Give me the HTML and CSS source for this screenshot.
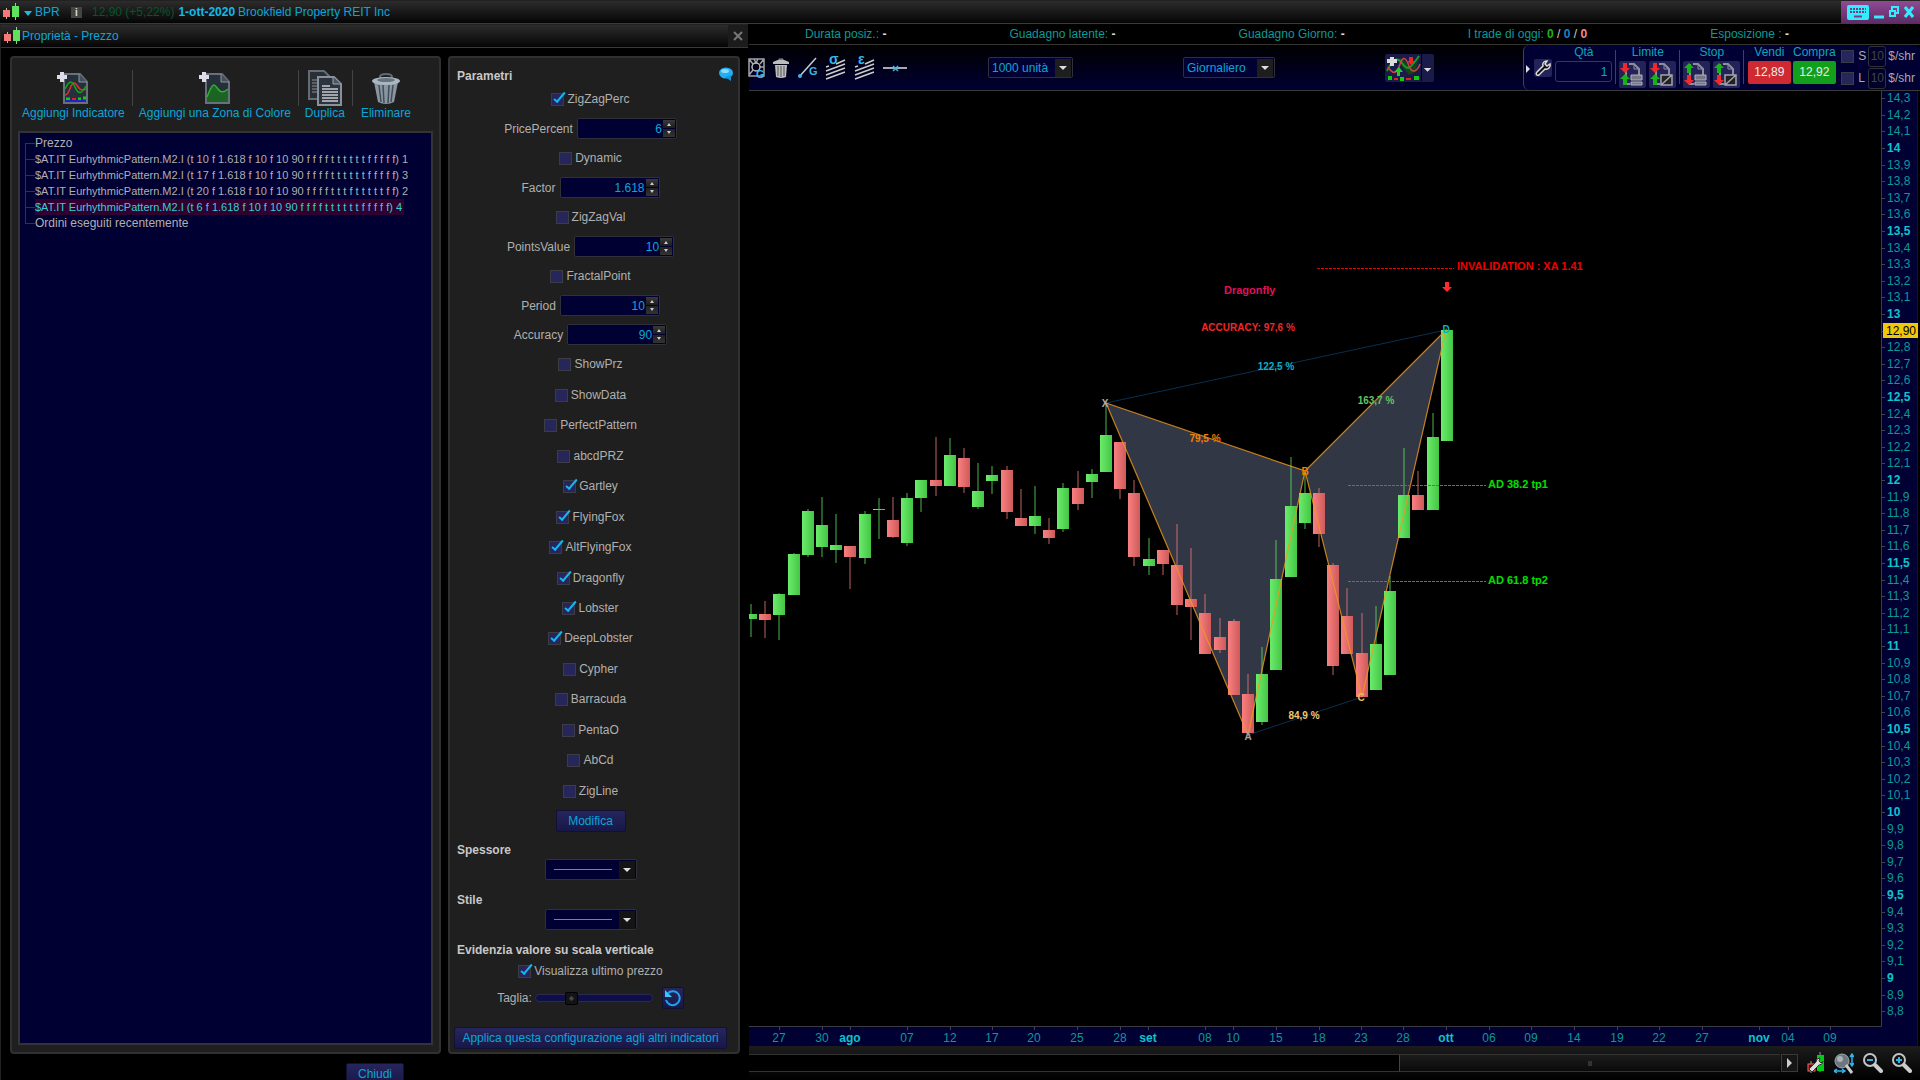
FILE: index.html
```html
<!DOCTYPE html>
<html lang="it">
<head>
    <meta charset="UTF-8">
    <meta name="viewport" content="width=device-width, initial-scale=1.0">
    <title>BPR - Brookfield Property REIT Inc</title>
    <link rel="stylesheet" href="styles.css">
</head>
<body>
    <svg class="defs" aria-hidden="true">
        <symbol id="i-candles" viewBox="0 0 18 18">
            <path d="M4.500 5v11M13.500 0v17" stroke="#9c9" stroke-width="1"/>
            <rect x="1" y="7" width="7" height="7" fill="#f47a7a"/>
            <rect x="10" y="3" width="7" height="11" fill="#5fe35f"/>
        </symbol>
        <symbol id="i-limit" viewBox="0 0 27 27">
            <path d="M10 3h5l5 5v6M7 3v20h4" fill="none" stroke="#8e8e9c" stroke-width="2"/>
            <path d="M15 3v5h5" fill="none" stroke="#8e8e9c"/>
            <path d="M4 2h4v5h3l-5 5-5-5h3z" fill="#f02a2a"/>
            <path d="M6 13l5 5H8v6H4v-6H1z" fill="#17b317"/>
        </symbol>
        <symbol id="i-stop" viewBox="0 0 27 27">
            <path d="M10 3h5l5 5v6M7 3v20h4" fill="none" stroke="#8e8e9c" stroke-width="2"/>
            <path d="M15 3v5h5" fill="none" stroke="#8e8e9c"/>
            <path d="M6 2l5 5H8v5H4V7H1z" fill="#17b317"/>
            <path d="M4 14h4v5h3l-5 5-5-5h3z" fill="#f02a2a"/>
        </symbol>
        <symbol id="i-bars" viewBox="0 0 27 27">
            <path d="M12 14h11v5H12zM12 21h11v3H12z" fill="#777786" stroke="#b4b4bf"/>
        </symbol>
        <symbol id="i-slash" viewBox="0 0 27 27">
            <path d="M12 14h11v10H12zM12 24l11-10" fill="#222" stroke="#a4a4af" stroke-width="1.500"/>
        </symbol>
        <symbol id="i-channel" viewBox="0 0 21 24">
            <path d="M1 15l19-7M1 19l19-7M1 23l19-7" stroke="#ccc" stroke-width="1.500"/>
            <path d="M1 11l3-1M11 8l9-4" stroke="#ccc" stroke-width="1.500"/>
        </symbol>
    </svg>

    <header class="titlebar">
        <svg class="candles"><use href="#i-candles"/></svg>
        <svg class="caret" viewBox="0 0 8 5"><path d="M0 0h8L4 5z" fill="#2bd"/></svg>
        <span class="symbol">BPR</span>
        <span class="info">i</span>
        <span class="quote">12,90 (+5,22%)</span>
        <strong>1-ott-2020</strong>
        <span>Brookfield Property REIT Inc</span>
        <div class="window-buttons">
            <button aria-label="Tastiera"><svg width="22" height="17" viewBox="0 0 22 17"><rect y="1" width="22" height="15" rx="2" fill="#35ecff"/><path d="M3 5h16M3 8h16" stroke="#7b3c80" stroke-width="2" stroke-dasharray="2 1"/><path d="M7 12.500h8" stroke="#7b3c80" stroke-width="2"/></svg></button>
            <button aria-label="Riduci"><svg width="10" height="14" viewBox="0 0 10 14"><path d="M0 12h10" stroke="#35ecff" stroke-width="3"/></svg></button>
            <button aria-label="Ripristina"><svg width="10" height="12" viewBox="0 0 10 12"><path d="M3 4V1h6v6H7" fill="none" stroke="#35ecff" stroke-width="2"/><rect x="1" y="5" width="5" height="5" fill="none" stroke="#35ecff" stroke-width="2"/></svg></button>
            <button aria-label="Chiudi finestra"><svg width="10" height="12" viewBox="0 0 10 12"><path d="M1 1l8 10M9 1L1 11" stroke="#35ecff" stroke-width="3"/></svg></button>
        </div>
    </header>

    <div class="workspace">
        <section class="dialog">
            <header class="titlebar dialog-title">
                <svg class="candles"><use href="#i-candles"/></svg>
                <span>Proprietà - Prezzo</span>
                <button class="dialog-close" aria-label="Chiudi pannello"><svg width="10" height="10" viewBox="0 0 10 10"><path d="M1 1l8 8M9 1L1 9" stroke="#777" stroke-width="2"/></svg></button>
            </header>
            <div class="dialog-body">
                <div class="panel tree-panel">
                    <div class="actions">
                        <button class="action">
                            <svg width="32" height="34" viewBox="0 0 32 34">
                                <path d="M7 3h16l7 8v21H7z" fill="#26303a" stroke="#66717d" stroke-width="2"/>
                                <path d="M22 3v8h8" fill="#444f5a" stroke="#8b96a2"/>
                                <path d="M8 24c5 0 5-12 9-12s4 10 12 6" fill="none" stroke="#d33" stroke-width="1.500"/>
                                <path d="M8 18c6-12 8-6 11 0s6 4 10-3" fill="none" stroke="#1a1" stroke-width="1.500"/>
                                <path d="M9 28h4M21 28h3M26 27h3" stroke="#1c1" stroke-width="3"/><path d="M15 28h4" stroke="#d22" stroke-width="2"/>
                                <path d="M8 30h21" stroke="#22c" stroke-width="2"/>
                                <path d="M5 1v10M0 6h10" stroke="#dcdcea" stroke-width="4"/>
                            </svg>
                            Aggiungi Indicatore
                        </button>
                        <button class="action">
                            <svg width="32" height="34" viewBox="0 0 32 34">
                                <path d="M7 3h16l7 8v21H7z" fill="#26303a" stroke="#66717d" stroke-width="2"/>
                                <path d="M22 3v8h8" fill="#444f5a" stroke="#8b96a2"/>
                                <path d="M8 26c2-4 4-12 7-12s5 12 14 4v13H8z" fill="#1d6424"/>
                                <path d="M8 26c2-4 4-12 7-12s5 12 14 4" fill="none" stroke="#2db02d" stroke-width="1.500"/>
                                <path d="M5 1v10M0 6h10" stroke="#dcdcea" stroke-width="4"/>
                            </svg>
                            Aggiungi una Zona di Colore
                        </button>
                        <button class="action">
                            <svg width="36" height="36" viewBox="0 0 36 36">
                                <path d="M2 1h15l7 7v21H2z" fill="#2a2f36" stroke="#646c76" stroke-width="2"/>
                                <path d="M5 10h6M5 13h6M5 16h6M5 19h6M5 22h6" stroke="#8b919a"/>
                                <path d="M11 7h16l7 7v21H11z" fill="#2d343d" stroke="#88929e" stroke-width="2"/>
                                <path d="M26 7v7h8" fill="#4c5662" stroke="#9aa4b0"/>
                                <path d="M15 16h8M15 19h16M15 22h16M15 25h16M15 28h16M15 31h16" stroke="#c8ccd2" stroke-width="1.500"/>
                            </svg>
                            Duplica
                        </button>
                        <button class="action">
                            <svg width="30" height="34" viewBox="0 0 30 34">
                                <path d="M9 8V6q0-3 6-3t6 3v2" fill="none" stroke="#606973" stroke-width="2"/>
                                <path d="M3 11h24l-4 20q-8 4-16 0z" fill="#8996a1"/>
                                <path d="M8 14l2 17M12 14l1 18M18 14l-1 18M22 14l-2 17" stroke="#414c57" stroke-width="1.500"/>
                                <ellipse cx="15" cy="10" rx="14" ry="4" fill="#a9b7c3"/><ellipse cx="15" cy="9" rx="9" ry="2" fill="#66737f"/>
                            </svg>
                            Eliminare
                        </button>
                    </div>
                    <ul class="tree">
                        <li><span>Prezzo</span></li>
                        <li><span class="indicator">$AT.IT EurhythmicPattern.M2.I (t 10 f 1.618 f 10 f 10 90 f f f f t t t t t t f f f f f) 1</span></li>
                        <li><span class="indicator">$AT.IT EurhythmicPattern.M2.I (t 17 f 1.618 f 10 f 10 90 f f f f t t t t t t f f f f f) 3</span></li>
                        <li><span class="indicator">$AT.IT EurhythmicPattern.M2.I (t 20 f 1.618 f 10 f 10 90 f f f f t t t f t t t t t f f) 2</span></li>
                        <li><span class="indicator selected">$AT.IT EurhythmicPattern.M2.I (t 6 f 1.618 f 10 f 10 90 f f f f t t t t t t f f f f f) 4</span></li>
                        <li><span>Ordini eseguiti recentemente</span></li>
                    </ul>
                </div>

                <form class="panel params">
                    <div class="params-head">
                        <h2>Parametri</h2>
                        <svg width="14" height="14" viewBox="0 0 14 14"><ellipse cx="7" cy="6" rx="7" ry="5.500" fill="#23aef3"/><path d="M6 10l6 4v-6z" fill="#1295e0"/><ellipse cx="6" cy="4" rx="4" ry="2" fill="#8adcff"/></svg>
                    </div>
                    <div class="group">
                        <label class="check"><input type="checkbox" checked>ZigZagPerc</label>
                        <div class="number"><label for="pricePercent">PricePercent</label><span class="spin"><input type="number" id="pricePercent" value="6"><i></i></span></div>
                        <label class="check"><input type="checkbox">Dynamic</label>
                        <div class="number"><label for="factor">Factor</label><span class="spin"><input type="number" id="factor" step="any" value="1.618"><i></i></span></div>
                        <label class="check"><input type="checkbox">ZigZagVal</label>
                        <div class="number"><label for="pointsValue">PointsValue</label><span class="spin"><input type="number" id="pointsValue" value="10"><i></i></span></div>
                        <label class="check"><input type="checkbox">FractalPoint</label>
                        <div class="number"><label for="period">Period</label><span class="spin"><input type="number" id="period" value="10"><i></i></span></div>
                        <div class="number"><label for="accuracy">Accuracy</label><span class="spin"><input type="number" id="accuracy" value="90"><i></i></span></div>
                    </div>
                    <div class="group patterns">
                        <label class="check"><input type="checkbox">ShowPrz</label>
                        <label class="check"><input type="checkbox">ShowData</label>
                        <label class="check"><input type="checkbox">PerfectPattern</label>
                        <label class="check"><input type="checkbox">abcdPRZ</label>
                        <label class="check"><input type="checkbox" checked>Gartley</label>
                        <label class="check"><input type="checkbox" checked>FlyingFox</label>
                        <label class="check"><input type="checkbox" checked>AltFlyingFox</label>
                        <label class="check"><input type="checkbox" checked>Dragonfly</label>
                        <label class="check"><input type="checkbox" checked>Lobster</label>
                        <label class="check"><input type="checkbox" checked>DeepLobster</label>
                        <label class="check"><input type="checkbox">Cypher</label>
                        <label class="check"><input type="checkbox">Barracuda</label>
                        <label class="check"><input type="checkbox">PentaO</label>
                        <label class="check"><input type="checkbox">AbCd</label>
                        <label class="check"><input type="checkbox">ZigLine</label>
                    </div>
                    <button type="button" class="btn modify">Modifica</button>
                    <h2><label for="thickness">Spessore</label></h2>
                    <select id="thickness" class="combo line-combo"><option></option></select>
                    <h2><label for="style">Stile</label></h2>
                    <select id="style" class="combo line-combo"><option></option></select>
                    <h2>Evidenzia valore su scala verticale</h2>
                    <label class="check last-price"><input type="checkbox" checked>Visualizza ultimo prezzo</label>
                    <div class="size-row">
                        <label for="size">Taglia:</label>
                        <input type="range" id="size" min="0" max="100" value="28">
                        <button type="button" class="btn reset" aria-label="Ripristina"><svg width="18" height="18" viewBox="0 0 18 18"><path d="M4 4a7 7 0 1 1-2 7" fill="none" stroke="#1ea4ee" stroke-width="2"/><path d="M1 1v7h7z" fill="#3cc4ff"/></svg></button>
                    </div>
                    <button type="button" class="btn apply">Applica questa configurazione agli altri indicatori</button>
                </form>
            </div>
            <button class="btn close-btn">Chiudi</button>
        </section>

        <main class="main">
            <div class="stats">
                <span>Durata posiz.: <b>-</b></span>
                <span>Guadagno latente: <b>-</b></span>
                <span>Guadagno Giorno: <b>-</b></span>
                <span>I trade di oggi: <b class="won">0</b> <em>/</em> <b class="even">0</b> <em>/</em> <b class="lost">0</b></span>
                <span>Esposizione : <b>-</b></span>
            </div>
            <div class="toolbar">
                <div class="draw-tools">
                    <button aria-label="Griglia"><svg width="16" height="22" viewBox="0 0 16 22"><path d="M0 2h15v17H0zM0 2l4 5M15 2l-4 5M0 18l4-5M15 10h-4M5 2l2 4M9 2L7 6" fill="none" stroke="#a3a3a3" stroke-width="1.500"/><circle cx="7" cy="10" r="4" fill="none" stroke="#bbb" stroke-width="1.500"/><text x="7" y="21" class="glyph">G</text></svg></button>
                    <button aria-label="Cestino"><svg width="16" height="20" viewBox="0 0 16 20"><path d="M0 4q8-5 16 0v2H0zM2 7h12l-1 12q-5 2-10 0z" fill="#bcbcbc"/><path d="M5 8v10M8 8v11M11 8v10" stroke="#555"/><path d="M6 2V1h4v1" stroke="#999" fill="none"/></svg></button>
                    <button aria-label="Segmento"><svg width="20" height="22" viewBox="0 0 20 22"><path d="M2 20L19 1" stroke="#ccc" stroke-width="1.500"/><circle cx="3" cy="19" r="2" fill="#3bb5e8"/><text x="12" y="18" class="glyph">G</text></svg></button>
                    <button aria-label="Sigma"><svg width="21" height="24" viewBox="0 0 21 24"><use href="#i-channel"/><text x="4" y="8" class="glyph greek">σ</text></svg></button>
                    <button aria-label="Epsilon"><svg width="21" height="24" viewBox="0 0 21 24"><use href="#i-channel"/><text x="4" y="8" class="glyph greek">ε</text></svg></button>
                    <button aria-label="Linea orizzontale"><svg width="24" height="10" viewBox="0 0 24 10"><path d="M0 5h24" stroke="#aaa" stroke-width="2"/><path d="M10 3l5 5M15 3l-5 5" stroke="#3bb5e8" stroke-width="1.500"/></svg></button>
                </div>
                <select class="combo units" aria-label="Unità"><option>1000 unità</option></select>
                <select class="combo timeframe" aria-label="Periodo"><option>Giornaliero</option></select>
                <button class="indicator-btn" aria-label="Indicatori">
                    <svg width="36" height="27" viewBox="0 0 36 27"><path d="M12 6q5-4 10 4c3 5 7 4 12-6l-4 14-6 3z" fill="#0d4a16"/><path d="M2 17C7 6 12 2 17 9s7 8 17-7" fill="none" stroke="#1b9a2b" stroke-width="2"/><path d="M3 13c6 9 9 6 12-3s6-6 9 2 8 6 11-2" fill="none" stroke="#c44" stroke-width="1.500"/><path d="M7 3v9M2 7h10" stroke="#ddd" stroke-width="4"/><path d="M14 13l4 5h-3v4h-3v-4h-3z" fill="#2c2"/><path d="M24 3h4v4h2l-4 4-4-4h2z" fill="#e22"/><path d="M3 24h4M15 25h4M29 24h5" stroke="#1c1" stroke-width="4"/><path d="M9 25h4M21 25h5" stroke="#d22" stroke-width="2"/></svg>
                    <svg class="drop" width="13" height="27" viewBox="0 0 13 27"><path d="M2 14h8l-4 4z" fill="#ddd"/></svg>
                </button>
                <div class="trade">
                    <svg class="trade-arrow" width="4" height="8" viewBox="0 0 4 8"><path d="M0 0l4 4-4 4z" fill="#ddd"/></svg>
                    <button class="tool wrench" aria-label="Impostazioni"><svg width="18" height="18" viewBox="0 0 18 18"><path d="M3 13l6-6c-1-3 1-5 4-5l-2 3 2 2 3-2c1 3-2 6-5 5l-6 6c-2 1-4-1-2-3z" fill="#111" stroke="#ddd" stroke-width="1.500"/></svg></button>
                    <div class="trade-col qty-col"><label for="qty">Qtà</label><input id="qty" class="qty" type="text" value="1"></div>
                    <div class="trade-col divided"><span>Limite</span><div class="pair">
                        <button class="tool" aria-label="Limite semplice"><svg width="27" height="27"><use href="#i-limit"/><use href="#i-bars"/></svg></button>
                        <button class="tool" aria-label="Limite obliquo"><svg width="27" height="27"><use href="#i-limit"/><use href="#i-slash"/></svg></button>
                    </div></div>
                    <div class="trade-col divided"><span>Stop</span><div class="pair">
                        <button class="tool" aria-label="Stop semplice"><svg width="27" height="27"><use href="#i-stop"/><use href="#i-bars"/></svg></button>
                        <button class="tool" aria-label="Stop obliquo"><svg width="27" height="27"><use href="#i-stop"/><use href="#i-slash"/></svg></button>
                    </div></div>
                    <div class="trade-col divided price-col"><span>Vendi</span><button class="sell">12,89</button></div>
                    <div class="trade-col price-col"><span>Compra</span><button class="buy">12,92</button></div>
                    <div class="risk">
                        <div><label><input type="checkbox">S</label><input type="text" value="10" aria-label="Stop per azione" disabled>$/shr</div>
                        <div><label><input type="checkbox">L</label><input type="text" value="10" aria-label="Limite per azione" disabled>$/shr</div>
                    </div>
                </div>
            </div>

            <svg id="chart" class="chart" viewBox="749 91 1171 955"></svg>

            <div class="bottom-bar">
                <div class="scroll-track"><div class="scroll-thumb"><i></i></div></div>
                <button class="scroll-next" aria-label="Avanti"><svg width="5" height="10" viewBox="0 0 5 10"><path d="M0 0l5 5-5 5z" fill="#ccc"/></svg></button>
                <button aria-label="Impostazioni grafico"><svg width="18" height="22" viewBox="0 0 18 22"><path d="M4 9v12M13 0v20" stroke="#999"/><rect x="1" y="12" width="7" height="7" fill="#511" stroke="#f66"/><rect x="10" y="3" width="7" height="16" fill="#0c1"/><path d="M2 17l7-7q0-4 4-4l-1 3 2 2 2-2q0 4-4 4l-7 7z" fill="#ddd" stroke="#333"/></svg></button>
                <button aria-label="Adatta"><svg width="20" height="21" viewBox="0 0 20 21"><circle cx="8" cy="8" r="7" fill="#6f7680" stroke="#9aa"/><circle cx="6" cy="6" r="3" fill="#a9b0b8"/><path d="M12 12l6 8" stroke="#ccc" stroke-width="3"/><path d="M18 2v10M16 4l2-3 2 3M16 10l2 3 2-3M1 18h9M3 16l-3 2 3 2M8 16l3 2-3 2" stroke="#2bb4ee" fill="none" stroke-width="1.500"/></svg></button>
                <button aria-label="Riduci zoom"><svg width="20" height="20" viewBox="0 0 20 20"><circle cx="7" cy="7" r="6" fill="#111" stroke="#c4c4c4" stroke-width="2"/><path d="M12 12l6 6" stroke="#ccc" stroke-width="4" stroke-linecap="round"/><path d="M4 7h6" stroke="#2bb4ee" stroke-width="2"/></svg></button>
                <button aria-label="Aumenta zoom"><svg width="20" height="20" viewBox="0 0 20 20"><circle cx="7" cy="7" r="6" fill="#111" stroke="#c4c4c4" stroke-width="2"/><path d="M12 12l6 6" stroke="#ccc" stroke-width="4" stroke-linecap="round"/><path d="M4 7h6M7 4v6" stroke="#2bb4ee" stroke-width="2"/></svg></button>
            </div>
        </main>
    </div>
    <script src="chart.js"></script>
</body>
</html>
```
FILE: styles.css
```css
* {
    box-sizing: border-box;
}
body {
    margin: 0;
    height: 100vh;
    display: flex;
    flex-direction: column;
    overflow: hidden;
    background: #000;
    color: #b0b0b0;
    font-family: "Liberation Sans", Arial, sans-serif;
    font-size: 12px;
}
button, input, select {
    font: inherit;
    color: inherit;
}
button {
    display: inline-flex;
    align-items: center;
    justify-content: center;
    padding: 0;
    border: 0;
    background: none;
    white-space: nowrap;
    cursor: pointer;
}
svg {
    display: block;
    flex: none;
}
.defs {
    position: absolute;
    width: 0;
    height: 0;
}

/* title bars */
.titlebar {
    flex: none;
    display: flex;
    align-items: center;
    height: 24px;
    padding-left: 2px;
    border-top: 1px solid #222;
    border-bottom: 1px solid #383838;
    background: linear-gradient(#2c2c2c, #050505);
    color: #0aa6d8;
}
.candles {
    width: 18px;
    height: 18px;
}
.caret {
    width: 8px;
    height: 5px;
    margin: 2px 3px 0 4px;
}
.symbol {
    width: 36px;
}
.info {
    width: 11px;
    height: 11px;
    margin-right: 10px;
    background: #444;
    color: #ddd;
    font-size: 10px;
    font-weight: bold;
    line-height: 11px;
    text-align: center;
}
.quote {
    margin-right: 4px;
    color: #07552a;
}
.titlebar strong {
    margin-right: 3px;
    color: #12b9ee;
}
.window-buttons {
    display: flex;
    align-items: center;
    gap: 5px;
    height: 23px;
    margin-left: auto;
    padding: 0 6px 0 6px;
    background: linear-gradient(#8f4b94, #5c2a62);
}

.workspace {
    flex: 1;
    display: flex;
    min-height: 0;
}

/* properties dialog */
.dialog {
    flex: none;
    width: 749px;
    display: flex;
    flex-direction: column;
    align-items: center;
    border-left: 1px solid #222;
}
.dialog-title {
    align-self: stretch;
    margin-right: 1px;
}
.dialog-title span {
    margin-left: 1px;
}
.dialog-close {
    width: 20px;
    height: 22px;
    margin-left: auto;
    background: #1c1c1c;
}
.dialog-body {
    flex: 1;
    align-self: stretch;
    display: flex;
    gap: 7px;
    padding: 8px 9px 0;
    min-height: 0;
}
.panel {
    border: 2px solid #303030;
    border-radius: 4px;
    background: #1f1f1f;
}
.tree-panel {
    flex: none;
    width: 431px;
    display: flex;
    flex-direction: column;
    padding: 10px 6px 7px;
}
.actions {
    display: flex;
    height: 63px;
    padding: 2px 0 0;
}
.action {
    position: relative;
    flex-direction: column;
    justify-content: flex-start;
    height: 50px;
    padding: 0 7px;
    color: #0aa6d8;
}
.action + .action::before {
    content: "";
    position: absolute;
    left: 0;
    top: 0;
    height: 36px;
    border-left: 1px solid #444;
}
.action svg {
    height: 36px;
}
.action:first-child {
    padding-left: 4px;
}
.action:last-child {
    padding-left: 9px;
}
.tree {
    flex: 1;
    margin: 0;
    padding: 2px 0 0 5px;
    border: 2px solid #333338;
    background: #000033;
    list-style: none;
    white-space: nowrap;
    overflow: hidden;
}
.tree li {
    position: relative;
    height: 16px;
    padding-left: 10px;
    line-height: 16px;
}
.tree li::before {
    content: "";
    position: absolute;
    left: 0;
    top: 0;
    width: 9px;
    height: 8px;
    border-left: 1px solid #0b3f6c;
    border-bottom: 1px solid #0b3f6c;
}
.tree li:not(:first-child):not(:last-child)::after {
    content: "";
    position: absolute;
    left: 0;
    top: 8px;
    height: 8px;
    border-left: 1px solid #0b3f6c;
}
.tree li:first-child::before {
    top: 8px;
    border-top: 1px solid #0b3f6c;
    border-bottom: 0;
}
.tree span {
    display: inline-block;
}
.tree .indicator {
    font-size: 11px;
}
.tree .selected {
    padding-right: 2px;
    background: #300030;
    color: #2fd0d8;
}

.params {
    flex: 1;
    min-width: 0;
    display: flex;
    flex-direction: column;
    align-items: center;
    padding: 5px 11px 3px 4px;
}
.params h2 {
    align-self: flex-start;
    height: 18px;
    margin: 9px 0 0 3px;
    color: #c8c8c8;
    font-size: 12px;
    line-height: 18px;
}
.params-head {
    align-self: stretch;
    display: flex;
    justify-content: space-between;
    align-items: center;
    height: 21px;
}
.params-head h2 {
    margin-top: 4px;
}
.params-head svg {
    margin-right: -6px;
}
.group {
    display: flex;
    flex-direction: column;
    align-items: center;
}
.patterns {
    flex: 1;
    margin-bottom: 4px;
}
.patterns .check {
    flex: 1;
}
.check {
    display: flex;
    align-items: center;
    gap: 3px;
    height: 30px;
}
input[type="checkbox"] {
    appearance: none;
    position: relative;
    width: 13px;
    height: 13px;
    margin: 1px 0 0;
    border: 1px solid #3c3c44;
    background: #26265a;
}
.check input:checked::after {
    content: "";
    position: absolute;
    left: 5px;
    top: -4px;
    width: 3px;
    height: 11px;
    border-right: 2px solid #12b8f5;
    border-bottom: 2px solid #12b8f5;
    transform: rotate(40deg);
}
.number {
    display: flex;
    align-items: center;
    gap: 4px;
    height: 29px;
}
.spin {
    display: flex;
    align-items: center;
    width: 100px;
    height: 21px;
    border: 1px solid #303038;
    border-radius: 2px;
    background: #000033;
}
.spin input {
    width: 84px;
    padding: 0;
    border: 0;
    background: none;
    color: #0aa6d8;
    text-align: right;
    appearance: textfield;
}
.spin input::-webkit-inner-spin-button {
    display: none;
}
.spin i {
    position: relative;
    width: 12px;
    height: 17px;
    margin-left: 1px;
    background: linear-gradient(#3a3a3a, #1c1c1c 47%, #000033 47%, #000033 53%, #222 53%, #333);
}
.spin i::before, .spin i::after {
    content: "";
    position: absolute;
    left: 4px;
    border: 2px solid transparent;
}
.spin i::before {
    top: 1px;
    border-bottom: 3px solid #ccc;
}
.spin i::after {
    bottom: 1px;
    border-top: 3px solid #ccc;
}
.btn {
    flex: none;
    height: 22px;
    border: 1px solid #111133;
    border-radius: 2px;
    background: linear-gradient(#26265e, #171747);
    color: #0aa6d8;
}
.modify {
    width: 70px;
}
.combo {
    appearance: none;
    flex: none;
    height: 21px;
    margin: 0;
    padding: 0 20px 0 3px;
    border: 1px solid #30303a;
    border-radius: 2px;
    background: url("data:image/svg+xml,%3Csvg xmlns='http://www.w3.org/2000/svg' width='17' height='19'%3E%3Crect width='16' height='18' y='1' fill='%231e1e1e'/%3E%3Cpath d='M4 8h8l-4 4z' fill='%23ddd'/%3E%3C/svg%3E") no-repeat right center, #000033;
    color: #0aa6d8;
}
.line-combo {
    width: 92px;
    margin-bottom: 2px;
    background: url("data:image/svg+xml,%3Csvg xmlns='http://www.w3.org/2000/svg' width='17' height='19'%3E%3Crect width='16' height='18' y='1' fill='%23141414'/%3E%3Cpath d='M4 8h8l-4 4z' fill='%23ddd'/%3E%3C/svg%3E") no-repeat right center, linear-gradient(#14a8e4, #14a8e4) no-repeat 8px 9px / 58px 1px, #000033;
}
.last-price {
    height: 24px;
}
.size-row {
    display: flex;
    align-items: center;
    height: 30px;
}
.size-row input {
    appearance: none;
    width: 118px;
    height: 8px;
    margin: 0 9px 0 3px;
    border: 1px solid #2b2b50;
    border-radius: 4px;
    background: #0e0e48;
}
.size-row input::-webkit-slider-thumb {
    appearance: none;
    width: 13px;
    height: 13px;
    border: 1px solid #000;
    border-radius: 2px;
    background: radial-gradient(#444 25%, #131313 30%);
}
.reset {
    width: 22px;
}
.apply {
    align-self: stretch;
    margin-top: 14px;
}
.close-btn {
    width: 58px;
    margin: 9px 0 -5px;
}

/* chart side */
.main {
    flex: 1;
    min-width: 0;
    display: flex;
    flex-direction: column;
}
.stats {
    flex: none;
    display: flex;
    justify-content: space-between;
    height: 21px;
    padding: 0 131px 0 56px;
    border-bottom: 1px solid #333;
    color: #0a9a98;
    line-height: 20px;
    white-space: nowrap;
}
.stats b {
    color: #ddd;
}
.stats em {
    color: #ccc;
    font-style: normal;
}
.stats .won {
    color: #19b419;
}
.stats .even {
    color: #1a80c8;
}
.stats .lost {
    color: #f58a8a;
}
.toolbar {
    flex: none;
    display: flex;
    align-items: center;
    height: 46px;
    border-bottom: 1px solid #3a3a3a;
    background: linear-gradient(#000, #000033);
}
.draw-tools {
    display: flex;
    align-items: center;
    gap: 8px;
    flex: 0 1 239px;
}
.draw-tools svg {
    overflow: visible;
}
.glyph {
    fill: #3bb5e8;
    font-size: 11px;
    font-weight: bold;
}
.greek {
    font-size: 14px;
}
.units {
    width: 85px;
    margin-right: 110px;
}
.timeframe {
    width: 92px;
}
.indicator-btn {
    height: 28px;
    margin-left: auto;
    border-radius: 2px;
    background: #1b1b4a;
}
.indicator-btn .drop {
    border-left: 1px solid #000;
}
.trade {
    display: flex;
    align-items: flex-start;
    height: 45px;
    margin-left: 89px;
    padding: 0 5px 0 2px;
    border-left: 1px solid #444;
    border-radius: 6px;
    background: #000033;
    color: #0aa6b8;
}
.trade-arrow {
    margin: 20px 4px 0 0;
}
.tool {
    width: 27px;
    height: 27px;
    border-radius: 2px;
    background: #23235a;
}
.wrench {
    width: 18px;
    height: 18px;
    margin: 14px 3px 0 0;
}
.trade-col {
    display: flex;
    flex-direction: column;
    align-items: center;
    height: 44px;
    line-height: 15px;
}
.trade-col > :last-child {
    margin-top: 1px;
}
.divided {
    position: relative;
    margin-left: 7px;
}
.divided::before {
    content: "";
    position: absolute;
    left: -4px;
    top: 5px;
    height: 34px;
    border-left: 1px solid #444;
}
.qty {
    width: 57px;
    height: 21px;
    padding: 0 4px;
    border: 1px solid #3a3a44;
    border-radius: 3px;
    background: #000033;
    color: #0aa6d8;
    text-align: right;
}
.pair {
    display: flex;
    gap: 3px;
}
.price-col {
    width: 44px;
}
.price-col:not(.divided) {
    margin-left: 1px;
}
.sell, .buy {
    width: 43px;
    height: 23px;
    border-radius: 2px;
    color: #eee;
}
.sell {
    background: #cf2a32;
}
.buy {
    background: #12a01c;
}
.risk {
    display: flex;
    flex-direction: column;
    margin-left: 5px;
    color: #aaa;
}
.risk div, .risk label {
    display: flex;
    align-items: center;
}
.risk div {
    gap: 2px;
    height: 22px;
}
.risk label {
    gap: 4px;
    width: 25px;
}
.risk input[type="text"] {
    width: 18px;
    height: 21px;
    padding: 0;
    border: 1px solid #30303a;
    border-radius: 3px;
    background: #000028;
    color: #444;
    text-align: center;
}

.chart {
    width: 100%;
    min-height: 0;
    flex: 0 1 auto;
}
.chart text {
    font-size: 12px;
    fill: #0a9a98;
    text-anchor: middle;
}
.chart .price {
    text-anchor: start;
}
.chart .major {
    font-weight: bold;
    fill: #0cc4cc;
}
.chart .current {
    fill: #000;
}
.chart .note {
    font-size: 10px;
    font-weight: bold;
}
.chart .title {
    font-size: 11px;
    font-weight: bold;
    text-anchor: start;
}

.bottom-bar {
    flex: 1 0 34px;
    display: flex;
    align-items: center;
    gap: 9px;
    padding: 0 8px 0 0;
    background: linear-gradient(#1c1c1c, #000);
}
.scroll-track {
    flex: 1;
    height: 18px;
    border-top: 1px solid #333;
    border-bottom: 1px solid #333;
    background: #000;
}
.scroll-thumb {
    display: flex;
    align-items: center;
    justify-content: center;
    width: 37%;
    height: 16px;
    margin-left: auto;
    border-left: 1px solid #444;
    background: linear-gradient(#1c1c1c, #0a0a0a);
}
.scroll-thumb i {
    width: 4px;
    height: 5px;
    background: #333;
}
.scroll-next {
    width: 17px;
    height: 18px;
    margin-left: -8px;
    border: 1px solid #3a3a3a;
    background: #151515;
}
```
FILE: chart.js
```js
const chart = document.getElementById('chart');
const NS = 'http://www.w3.org/2000/svg';

function add(tag, attrs, text) {
    const el = document.createElementNS(NS, tag);
    for (const name in attrs) el.setAttribute(name, attrs[name]);
    if (text) el.textContent = text;
    chart.appendChild(el);
    return el;
}

// colour, wick top, body top, body bottom, wick bottom
const candles = [
    ['g', 604, 614, 619, 637], ['r', 601, 614, 620, 638], ['g', 593, 594, 615, 640],
    ['g', 553, 554, 595, 595], ['g', 509, 511, 555, 557], ['g', 497, 525, 547, 557],
    ['g', 514, 545, 550, 563], ['r', 546, 546, 557, 589], ['g', 511, 514, 558, 564],
    ['g', 498, 509, 510, 539], ['r', 497, 520, 537, 538], ['g', 493, 498, 543, 546],
    ['g', 480, 480, 498, 512], ['r', 437, 480, 486, 496], ['g', 438, 455, 486, 486],
    ['r', 448, 458, 487, 493], ['g', 463, 491, 507, 509], ['g', 466, 475, 481, 494],
    ['r', 466, 470, 512, 519], ['r', 489, 518, 526, 526], ['g', 486, 516, 526, 534],
    ['r', 518, 530, 538, 544], ['g', 483, 488, 529, 532], ['r', 471, 488, 504, 510],
    ['g', 469, 474, 482, 498], ['g', 403, 435, 472, 472], ['r', 442, 442, 489, 499],
    ['r', 480, 493, 557, 566], ['g', 538, 559, 566, 575], ['r', 550, 550, 564, 575],
    ['r', 524, 565, 605, 615], ['r', 548, 599, 607, 640], ['r', 594, 613, 654, 654],
    ['r', 618, 637, 650, 653], ['r', 619, 621, 695, 695], ['r', 674, 694, 733, 733],
    ['g', 647, 674, 722, 725], ['g', 540, 579, 670, 670], ['g', 457, 506, 577, 577],
    ['g', 472, 493, 523, 529], ['r', 488, 493, 534, 547], ['r', 563, 565, 666, 675],
    ['r', 588, 616, 654, 654], ['r', 613, 653, 697, 697], ['g', 606, 644, 690, 690],
    ['g', 576, 591, 675, 675], ['g', 448, 495, 538, 538], ['r', 471, 495, 510, 510],
    ['g', 413, 437, 510, 510], ['g', 330, 330, 441, 441]
];

const defs = add('defs', {});
defs.innerHTML = '<linearGradient id="g"><stop stop-color="#6cec6c"/><stop offset="1" stop-color="#44c544"/></linearGradient>' +
    '<linearGradient id="r"><stop stop-color="#f98080"/><stop offset="1" stop-color="#cf5a5a"/></linearGradient>';

// pattern background
add('path', { d: 'M1106 403L1248 735L1305 471zM1305 471L1362 697L1446 330z', fill: '#323746' });
add('path', { d: 'M1106 403L1446 330M1248 735L1362 697', stroke: '#062f52', fill: 'none' });

candles.forEach(([color, high, top, bottom, low], i) => {
    const x = Math.round(751 + i * 14.2);
    const edge = color === 'g' ? '#5fe05f' : '#f07c7c';
    add('rect', { x: x - 0.5, y: high, width: 1, height: low - high, fill: edge, opacity: 0.8 });
    add('rect', { x: x - 6, y: top, width: 12, height: bottom - top, fill: `url(#${color})` });
});

add('path', {
    d: 'M1106 403L1248 735L1305 471zM1305 471L1362 697L1446 330z',
    fill: 'none', stroke: '#f09a1c', 'stroke-opacity': 0.8, 'stroke-width': 1.2
});

// targets
[[1317, 268, 1454, '#e00000'], [1348, 485, 1486, '#00b800'], [1348, 581, 1486, '#00b800']].forEach(([x1, y, x2, stroke]) => {
    add('line', { x1, x2, y1: y + 0.5, y2: y + 0.5, stroke, 'stroke-dasharray': '3 1' });
});
add('path', { d: 'M1445 282h4v5h3l-5 5-5-5h3z', fill: '#ff2a2a' });

const notes = [
    ['title', 1457, 270, '#f00000', 'INVALIDATION : XA 1.41'],
    ['title', 1224, 294, '#e0105c', 'Dragonfly'],
    ['title', 1488, 488, '#00e000', 'AD 38.2 tp1'],
    ['title', 1488, 584, '#00e000', 'AD 61.8 tp2'],
    ['note', 1248, 331, '#f02828', 'ACCURACY: 97,6 %'],
    ['note', 1276, 370, '#0ab0c8', '122,5 %'],
    ['note', 1376, 404, '#5fc75f', '163,7 %'],
    ['note', 1205, 442, '#f08000', '79,5 %'],
    ['note', 1304, 719, '#f0c870', '84,9 %'],
    ['note', 1105, 407, '#b0b0b0', 'X'],
    ['note', 1248, 740, '#a0a0a0', 'A'],
    ['note', 1305, 475, '#f08000', 'B'],
    ['note', 1361, 701, '#f0b860', 'C'],
    ['note', 1446, 333, '#0ab0c8', 'D']
];
notes.forEach(([cls, x, y, color, text]) => add('text', { class: cls, x, y, style: `fill:${color}` }, text));

// axes
add('path', { d: 'M1882 91h35v955H749v-20h1133z', fill: '#000033' });
add('path', { d: 'M749 1026.500H1881.500V91', fill: 'none', stroke: '#3c3c44' });
add('path', { d: 'M1917.500 91V1046', stroke: '#141414' });

for (let p = 143; p >= 88; p--) {
    const y = 148 + (140 - p) * 16.6;
    const major = p % 5 === 0;
    add('path', { d: `M1882 ${Math.round(y) + 0.5}h3`, stroke: '#444' });
    if (p === 129) {
        add('rect', { x: 1883, y: 323, width: 35, height: 15, fill: '#f0c808' });
        add('text', { class: 'price current', x: 1886, y: 335 }, '12,90');
    } else {
        const label = p % 10 === 0 ? String(p / 10) : (p / 10).toFixed(1).replace('.', ',');
        add('text', { class: major ? 'price major' : 'price', x: 1887, y: Math.round(y + 4) }, label);
    }
}

const dates = [
    [779, '27'], [822, '30'], [850, 'ago'], [907, '07'], [950, '12'], [992, '17'], [1034, '20'],
    [1077, '25'], [1120, '28'], [1148, 'set'], [1205, '08'], [1233, '10'], [1276, '15'], [1319, '18'],
    [1361, '23'], [1403, '28'], [1446, 'ott'], [1489, '06'], [1531, '09'], [1574, '14'], [1617, '19'],
    [1659, '22'], [1702, '27'], [1759, 'nov'], [1788, '04'], [1830, '09']
];
dates.forEach(([x, text]) => {
    add('path', { d: `M${x + 0.5} 1027v3`, stroke: '#444' });
    add('text', { class: isNaN(text) ? 'major' : '', x, y: 1042 }, text);
});
```
